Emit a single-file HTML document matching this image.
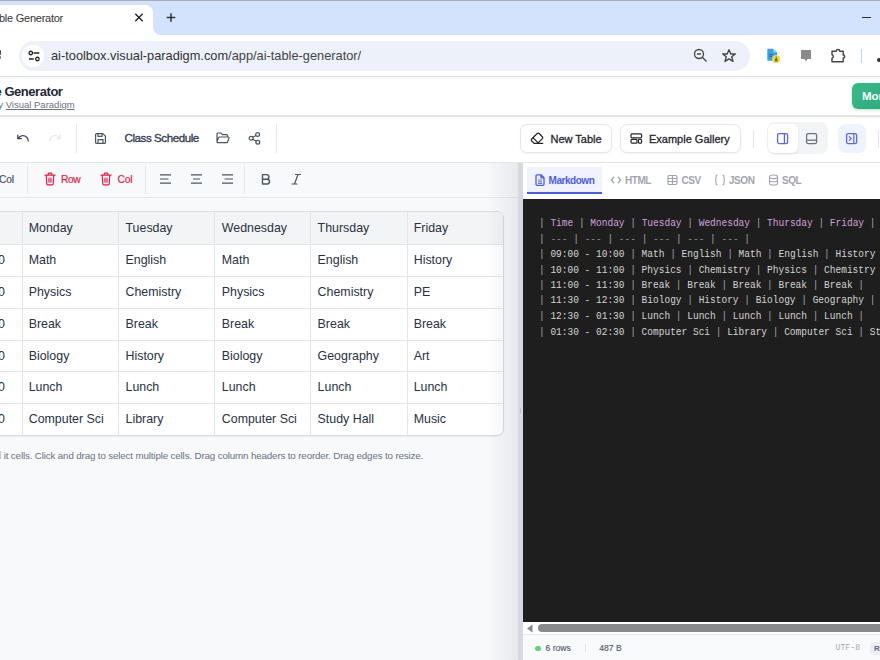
<!DOCTYPE html>
<html><head><meta charset="utf-8">
<style>
*{box-sizing:border-box;margin:0;padding:0}
html,body{width:880px;height:660px;overflow:hidden;background:#fff;font-family:"Liberation Sans",sans-serif;position:relative}
.a{position:absolute}
svg{display:block}
.t{white-space:nowrap}
.h{color:#d2a0dc}.p{color:#a6a6a6}.g{color:#858585}
.cell{font-size:12.4px;color:#283241;line-height:14px}
</style></head><body>

<!-- ===== browser tab strip ===== -->
<div class="a" style="left:0;top:0;width:880px;height:35px;background:#d3e3fd"></div>
<div class="a" style="left:0;top:0;width:880px;height:1px;background:#a9acb2"></div>
<div class="a" style="left:145px;top:25px;width:20px;height:10px;background:#fff"></div>
<div class="a" style="left:153px;top:1px;width:727px;height:34px;background:#d3e3fd;border-bottom-left-radius:8px"></div>
<div class="a" style="left:-10px;top:5px;width:163px;height:35px;background:#fff;border-top-right-radius:8px"></div>
<div class="a t" style="left:-1px;top:12px;font-size:11px;letter-spacing:-0.25px;color:#333">ble Generator</div>
<svg class="a" style="left:133px;top:11px" width="12" height="12" viewBox="0 0 12 12"><path d="M2.3 2.8L9.7 10.2M9.7 2.8L2.3 10.2" stroke="#2a2a2a" stroke-width="1.5"/></svg>
<svg class="a" style="left:165px;top:11px" width="12" height="12" viewBox="0 0 12 12"><path d="M6 2.2V10.8M1.7 6.5H10.3" stroke="#333" stroke-width="1.5"/></svg>

<div class="a" style="left:862px;top:16.6px;width:9px;height:1.4px;background:#2a2a2a"></div>
<!-- ===== browser toolbar ===== -->
<div class="a" style="left:0;top:76px;width:880px;height:1.2px;background:#dedede"></div><div class="a" style="left:0;top:77.2px;width:880px;height:2.5px;background:linear-gradient(rgba(0,0,0,0.035),rgba(0,0,0,0))"></div>
<div class="a" style="left:19px;top:41px;width:731px;height:30px;background:#edf2fa;border-radius:15px"></div>
<div class="a" style="left:22px;top:45px;width:22px;height:22px;background:#fff;border-radius:11px"></div>
<svg class="a" style="left:27.5px;top:49.6px" width="13" height="13" viewBox="0 0 13 13"><circle cx="2.8" cy="3" r="1.75" fill="none" stroke="#222" stroke-width="1.3"/><path d="M5.6 3H11.3M1 9H5.8" stroke="#222" stroke-width="1.3"/><circle cx="9.4" cy="9" r="1.75" fill="none" stroke="#222" stroke-width="1.3"/></svg>
<div class="a t" style="left:51px;top:48px;font-size:12.8px;color:#333">ai-toolbox.visual-paradigm.com<span style="color:#444">/app/ai-table-generator/</span></div>
<!-- partial icon at left edge -->
<div class="a" style="left:-3px;top:50px;width:4px;height:5px;background:#4a4a4a;border-radius:1px"></div><div class="a" style="left:-3px;top:56px;width:4px;height:2.5px;background:#777;border-radius:1px"></div>
<!-- zoom -->
<svg class="a" style="left:693px;top:48px" width="15" height="15" viewBox="0 0 15 15"><circle cx="6" cy="6" r="4.5" fill="none" stroke="#474747" stroke-width="1.35"/><path d="M4 6H8M9.3 9.3L13.5 13.5" stroke="#474747" stroke-width="1.35"/></svg>
<!-- star -->
<svg class="a" style="left:721px;top:48px" width="16" height="16" viewBox="0 0 16 16"><path d="M8 1.8L9.8 6H14.3L10.7 8.8L12 13.4L8 10.8L4 13.4L5.3 8.8L1.7 6H6.2Z" fill="none" stroke="#474747" stroke-width="1.4" stroke-linejoin="round"/></svg>
<!-- ext icons -->
<svg class="a" style="left:766px;top:48px" width="16" height="16" viewBox="0 0 16 16"><path d="M2.3 0.7H7.2L11 4.5V11.8A1 1 0 0 1 10 12.8H2.3A1 1 0 0 1 1.3 11.8V1.7A1 1 0 0 1 2.3 0.7Z" fill="#3aa0ea"/><path d="M7.2 0.7L11 4.5H7.2Z" fill="#6fe0c8"/><path d="M3.2 6.5H6.6M3.2 8.3H6" stroke="#1d5e9e" stroke-width="0.9"/><circle cx="10.2" cy="10.9" r="4" fill="#f3dc3a"/><path d="M10.2 8.6V11.8M8.9 10.9L10.2 12.3L11.5 10.9M8.6 12.9H11.8" stroke="#4a4320" stroke-width="0.9" fill="none"/></svg>
<svg class="a" style="left:800px;top:49px" width="12" height="14" viewBox="0 0 12 14"><path d="M1 1H11V10H7.5L6 12.5L4.5 10H1Z" fill="#8a8a8a"/></svg>
<svg class="a" style="left:830px;top:47px" width="17" height="17" viewBox="0 0 17 17"><path d="M2 4.2H6.3A1.6 1.6 0 0 1 9.7 4.2H13.2V8A1.5 1.5 0 0 1 13.2 11V14.8H2V11.2A2 1.8 0 0 0 2 7.8Z" fill="none" stroke="#474747" stroke-width="1.45" stroke-linejoin="round"/></svg>
<div class="a" style="left:861px;top:49px;width:1px;height:14px;background:#c4d4f2"></div>
<div class="a" style="left:877px;top:58px;width:4px;height:4px;background:#333;border-radius:2px"></div>

<!-- ===== app header ===== -->
<div class="a" style="left:0;top:115px;width:880px;height:1.5px;background:#e3e5e9"></div><div class="a" style="left:0;top:116.5px;width:880px;height:3px;background:linear-gradient(rgba(0,0,0,0.03),rgba(0,0,0,0))"></div>
<div class="a t" style="left:-29.5px;top:84px;font-size:13px;font-weight:bold;letter-spacing:-0.45px;color:#1f2937">Table Generator</div>
<div class="a t" style="left:-7px;top:99px;font-size:9.5px;color:#6b7280">by <span style="text-decoration:underline">Visual Paradigm</span></div>
<div class="a" style="left:852px;top:83px;width:60px;height:26px;border-radius:6px;background:linear-gradient(135deg,#38bb86,#27a37f);box-shadow:0 1px 3px rgba(16,120,80,0.25)"></div>
<div class="a t" style="left:862px;top:90.2px;font-size:11.5px;font-weight:bold;color:#fff">More</div>

<!-- ===== app toolbar ===== -->

<!-- toolbar left -->
<svg class="a" style="left:16px;top:131px" width="14" height="14" viewBox="0 0 24 24"><path d="M3 7v6h6M21 17a9 9 0 0 0-9-9 9 9 0 0 0-6 2.3L3 13" fill="none" stroke="#374151" stroke-width="2.1" stroke-linecap="round" stroke-linejoin="round"/></svg>
<svg class="a" style="left:48px;top:131px" width="14" height="14" viewBox="0 0 24 24"><path d="M21 7v6h-6M3 17a9 9 0 0 1 9-9 9 9 0 0 1 6 2.3L21 13" fill="none" stroke="#e5e7eb" stroke-width="2.1" stroke-linecap="round" stroke-linejoin="round"/></svg>
<div class="a" style="left:76px;top:124px;width:1px;height:29px;background:#e5e7eb"></div>
<svg class="a" style="left:94px;top:132px" width="13" height="13" viewBox="0 0 13 13"><path d="M1.6 2.6A1 1 0 0 1 2.6 1.6H8.8L11.4 4.2V10.4A1 1 0 0 1 10.4 11.4H2.6A1 1 0 0 1 1.6 10.4Z" fill="none" stroke="#4b5563" stroke-width="1.2" stroke-linejoin="round"/><path d="M4 11.4V7.6H9V11.4M4 1.6V4.4H8V1.6" fill="none" stroke="#4b5563" stroke-width="1.2" stroke-linejoin="round"/></svg>
<div class="a t" style="left:124.5px;top:131px;font-size:11.6px;letter-spacing:-0.45px;-webkit-text-stroke:0.35px #374151;color:#374151">Class Schedule</div>
<svg class="a" style="left:216px;top:132px" width="14" height="12" viewBox="0 0 14 12"><path d="M1 9.5V2A1 1 0 0 1 2 1H4.8L6.4 2.6H10.6A1 1 0 0 1 11.6 3.6V5M1 9.5L2.6 5.7A1 1 0 0 1 3.5 5H12.3A0.8 0.8 0 0 1 13 6L11.6 10A1 1 0 0 1 10.7 10.7H2.1A1 1 0 0 1 1 9.5Z" fill="none" stroke="#4b5563" stroke-width="1.2" stroke-linejoin="round"/></svg>
<svg class="a" style="left:248px;top:131px" width="13" height="14" viewBox="0 0 13 14"><circle cx="9.6" cy="3.5" r="1.9" fill="none" stroke="#4b5563" stroke-width="1.2"/><circle cx="3.1" cy="7.3" r="1.9" fill="none" stroke="#4b5563" stroke-width="1.2"/><circle cx="9.8" cy="11.2" r="1.9" fill="none" stroke="#4b5563" stroke-width="1.2"/><path d="M4.8 6.3L7.9 4.5M4.8 8.3L8.1 10.2" stroke="#4b5563" stroke-width="1.2"/></svg>
<div class="a" style="left:276px;top:124px;width:1px;height:29px;background:#e5e7eb"></div>

<!-- toolbar right -->
<div class="a" style="left:520px;top:124px;width:92px;height:29px;border:1px solid #e5e7eb;border-radius:7px;background:#fff;box-shadow:0 1px 2px rgba(0,0,0,0.05)"></div>
<svg class="a" style="left:530px;top:132px" width="14" height="12" viewBox="0 0 24 21"><path d="M7 20L2.7 15.7C1.7 14.7 1.7 13.2 2.7 12.3L12.3 2.7C13.3 1.7 14.8 1.7 15.7 2.7L21.3 8.3C22.3 9.3 22.3 10.8 21.3 11.7L13 20M22 20H7M5 10L14 19" fill="none" stroke="#27272a" stroke-width="2.1" stroke-linecap="round" stroke-linejoin="round"/></svg>
<div class="a t" style="left:550.5px;top:132.6px;font-size:11px;-webkit-text-stroke:0.3px #27272a;color:#27272a">New Table</div>
<div class="a" style="left:620px;top:124px;width:121px;height:29px;border:1px solid #e5e7eb;border-radius:7px;background:#fff;box-shadow:0 1px 2px rgba(0,0,0,0.05)"></div>
<svg class="a" style="left:630px;top:133px" width="13" height="11" viewBox="0 0 13 11"><rect x="1" y="0.8" width="10.6" height="4" rx="1" fill="none" stroke="#27272a" stroke-width="1.2"/><rect x="1" y="6.4" width="6" height="3.8" rx="1" fill="none" stroke="#27272a" stroke-width="1.2"/><rect x="8.4" y="6.4" width="3.2" height="3.8" rx="1" fill="none" stroke="#27272a" stroke-width="1.2"/></svg>
<div class="a t" style="left:649px;top:132.6px;font-size:11px;-webkit-text-stroke:0.3px #27272a;color:#27272a">Example Gallery</div>
<div class="a" style="left:753px;top:130px;width:1px;height:18px;background:#e5e7eb"></div>
<div class="a" style="left:767px;top:122px;width:61px;height:32px;border-radius:8px;background:#f3f4f6"></div>
<div class="a" style="left:768px;top:124px;width:30px;height:29px;border-radius:6px;background:#fff;box-shadow:0 1px 2px rgba(0,0,0,0.1)"></div>
<svg class="a" style="left:776px;top:132px" width="13" height="13" viewBox="0 0 13 13"><rect x="1.6" y="1.6" width="10" height="10" rx="1.6" fill="none" stroke="#5a66f0" stroke-width="1.3"/><path d="M8.4 1.6V11.6" stroke="#5a66f0" stroke-width="1.3"/></svg>
<svg class="a" style="left:805px;top:132px" width="13" height="13" viewBox="0 0 13 13"><rect x="1.6" y="1.6" width="10" height="10" rx="1.6" fill="none" stroke="#6b7280" stroke-width="1.3"/><path d="M1.6 8.2H11.6" stroke="#6b7280" stroke-width="1.3"/></svg>
<div class="a" style="left:837.5px;top:124px;width:28px;height:29px;border-radius:7px;background:#eef4ff"></div>
<svg class="a" style="left:845px;top:132px" width="13" height="13" viewBox="0 0 13 13"><rect x="1.6" y="1.6" width="10" height="10" rx="1.6" fill="none" stroke="#5a66f0" stroke-width="1.3"/><path d="M8.8 1.6V11.6M4 4.3L6.2 6.6L4 8.9" fill="none" stroke="#5a66f0" stroke-width="1.2"/></svg>
<div class="a" style="left:878px;top:130px;width:1px;height:18px;background:#e5e7eb"></div>

<!-- ===== left panel ===== -->
<div class="a" style="left:0;top:162px;width:518px;height:498px;background:#f8f9fb"></div>
<div class="a" style="left:0;top:197px;width:518px;height:1px;background:#e5e7eb"></div>
<!-- format toolbar -->
<div class="a t" style="left:-1px;top:174px;font-size:10.3px;letter-spacing:-0.2px;-webkit-text-stroke:0.2px #4b5563;color:#4b5563">Col</div>
<div class="a" style="left:27px;top:165px;width:1px;height:29px;background:#e5e7eb"></div>
<svg class="a" style="left:44px;top:172px" width="12" height="14" viewBox="0 0 12 14"><path d="M1 3.2H11M4.2 3.2V2A0.8 0.8 0 0 1 5 1.2H7A0.8 0.8 0 0 1 7.8 2V3.2M2.2 3.2L2.8 12A1 1 0 0 0 3.8 12.9H8.2A1 1 0 0 0 9.2 12L9.8 3.2M5 6V10.2M7 6V10.2" fill="none" stroke="#e11d48" stroke-width="1.2" stroke-linecap="round" stroke-linejoin="round"/></svg>
<div class="a t" style="left:61px;top:174px;font-size:10.3px;letter-spacing:-0.5px;-webkit-text-stroke:0.2px #e11d48;color:#e11d48">Row</div>
<svg class="a" style="left:100px;top:172px" width="12" height="14" viewBox="0 0 12 14"><path d="M1 3.2H11M4.2 3.2V2A0.8 0.8 0 0 1 5 1.2H7A0.8 0.8 0 0 1 7.8 2V3.2M2.2 3.2L2.8 12A1 1 0 0 0 3.8 12.9H8.2A1 1 0 0 0 9.2 12L9.8 3.2M5 6V10.2M7 6V10.2" fill="none" stroke="#e11d48" stroke-width="1.2" stroke-linecap="round" stroke-linejoin="round"/></svg>
<div class="a t" style="left:117.5px;top:174px;font-size:10.3px;letter-spacing:-0.2px;-webkit-text-stroke:0.2px #e11d48;color:#e11d48">Col</div>
<div class="a" style="left:145px;top:165px;width:1px;height:29px;background:#e5e7eb"></div>
<svg class="a" style="left:159px;top:173px" width="13" height="12" viewBox="0 0 13 12"><path d="M1 1.9H12M1 6H9.5M1 10.1H12" stroke="#4b5563" stroke-width="1.2"/></svg>
<svg class="a" style="left:190px;top:173px" width="13" height="12" viewBox="0 0 13 12"><path d="M1 1.9H12M3 6H10M1 10.1H12" stroke="#4b5563" stroke-width="1.2"/></svg>
<svg class="a" style="left:221px;top:173px" width="13" height="12" viewBox="0 0 13 12"><path d="M1 1.9H12M3.5 6H12M1 10.1H12" stroke="#4b5563" stroke-width="1.2"/></svg>
<div class="a" style="left:244px;top:165px;width:1px;height:29px;background:#e5e7eb"></div>
<svg class="a" style="left:260px;top:173px" width="12" height="12" viewBox="0 0 12 12"><path d="M2.5 1.6H6.6A2.3 2.3 0 0 1 6.6 6.2H2.5ZM2.5 6.2H7.1A2.4 2.4 0 0 1 7.1 11H2.5Z" fill="none" stroke="#4b5563" stroke-width="1.4" stroke-linejoin="round"/></svg>
<svg class="a" style="left:290px;top:173px" width="12" height="12" viewBox="0 0 12 12"><path d="M5 1.5H11M1.5 11H7.5M8 1.5L4.5 11" fill="none" stroke="#4b5563" stroke-width="1.2"/></svg>

<!-- table -->
<div class="a" style="left:-80px;top:211px;width:584px;height:225px;border:1px solid #d9dce2;border-radius:7px;background:#fff;box-shadow:0 1px 2px rgba(0,0,0,0.06);overflow:hidden">
</div>
<div class="a" style="left:-79px;top:212px;width:582px;height:32px;background:#f3f4f6"></div>
<div class="a" style="left:-79px;top:244px;width:582px;height:1px;background:#e3e5e9"></div>
<div class="a" style="left:-79px;top:276px;width:582px;height:1px;background:#e3e5e9"></div>
<div class="a" style="left:-79px;top:308px;width:582px;height:1px;background:#e3e5e9"></div>
<div class="a" style="left:-79px;top:340px;width:582px;height:1px;background:#e3e5e9"></div>
<div class="a" style="left:-79px;top:371px;width:582px;height:1px;background:#e3e5e9"></div>
<div class="a" style="left:-79px;top:403px;width:582px;height:1px;background:#e3e5e9"></div>
<div class="a" style="left:22px;top:212px;width:1px;height:223px;background:#e3e5e9"></div>
<div class="a" style="left:118px;top:212px;width:1px;height:223px;background:#e3e5e9"></div>
<div class="a" style="left:214px;top:212px;width:1px;height:223px;background:#e3e5e9"></div>
<div class="a" style="left:310px;top:212px;width:1px;height:223px;background:#e3e5e9"></div>
<div class="a" style="left:407px;top:212px;width:1px;height:223px;background:#e3e5e9"></div>
<div class="a t cell" style="left:28.7px;top:221px">Monday</div>
<div class="a t cell" style="left:125.5px;top:221px">Tuesday</div>
<div class="a t cell" style="left:221.8px;top:221px">Wednesday</div>
<div class="a t cell" style="left:317.6px;top:221px">Thursday</div>
<div class="a t cell" style="left:413.7px;top:221px">Friday</div>
<div class="a t cell" style="right:875px;top:253px">09:00 - 10:00</div>
<div class="a t cell" style="left:28.7px;top:253px">Math</div>
<div class="a t cell" style="left:125.5px;top:253px">English</div>
<div class="a t cell" style="left:221.8px;top:253px">Math</div>
<div class="a t cell" style="left:317.6px;top:253px">English</div>
<div class="a t cell" style="left:413.7px;top:253px">History</div>
<div class="a t cell" style="right:875px;top:285px">10:00 - 11:00</div>
<div class="a t cell" style="left:28.7px;top:285px">Physics</div>
<div class="a t cell" style="left:125.5px;top:285px">Chemistry</div>
<div class="a t cell" style="left:221.8px;top:285px">Physics</div>
<div class="a t cell" style="left:317.6px;top:285px">Chemistry</div>
<div class="a t cell" style="left:413.7px;top:285px">PE</div>
<div class="a t cell" style="right:875px;top:317px">11:00 - 11:30</div>
<div class="a t cell" style="left:28.7px;top:317px">Break</div>
<div class="a t cell" style="left:125.5px;top:317px">Break</div>
<div class="a t cell" style="left:221.8px;top:317px">Break</div>
<div class="a t cell" style="left:317.6px;top:317px">Break</div>
<div class="a t cell" style="left:413.7px;top:317px">Break</div>
<div class="a t cell" style="right:875px;top:349px">11:30 - 12:30</div>
<div class="a t cell" style="left:28.7px;top:349px">Biology</div>
<div class="a t cell" style="left:125.5px;top:349px">History</div>
<div class="a t cell" style="left:221.8px;top:349px">Biology</div>
<div class="a t cell" style="left:317.6px;top:349px">Geography</div>
<div class="a t cell" style="left:413.7px;top:349px">Art</div>
<div class="a t cell" style="right:875px;top:380px">12:30 - 01:30</div>
<div class="a t cell" style="left:28.7px;top:380px">Lunch</div>
<div class="a t cell" style="left:125.5px;top:380px">Lunch</div>
<div class="a t cell" style="left:221.8px;top:380px">Lunch</div>
<div class="a t cell" style="left:317.6px;top:380px">Lunch</div>
<div class="a t cell" style="left:413.7px;top:380px">Lunch</div>
<div class="a t cell" style="right:875px;top:412px">01:30 - 02:30</div>
<div class="a t cell" style="left:28.7px;top:412px">Computer Sci</div>
<div class="a t cell" style="left:125.5px;top:412px">Library</div>
<div class="a t cell" style="left:221.8px;top:412px">Computer Sci</div>
<div class="a t cell" style="left:317.6px;top:412px">Study Hall</div>
<div class="a t cell" style="left:413.7px;top:412px">Music</div>
<div class="a t" style="left:3.7px;top:450px;font-size:9.8px;letter-spacing:-0.155px;color:#6b7280">it cells. Click and drag to select multiple cells. Drag column headers to reorder. Drag edges to resize.</div><div class="a" style="left:0;top:451px;width:1px;height:8px;background:#c5c9d0"></div>

<!-- resize shadow -->
<div class="a" style="left:486px;top:162px;width:32px;height:498px;background:linear-gradient(90deg,rgba(30,40,60,0),rgba(30,40,60,0.075))"></div>


<!-- ===== divider ===== -->
<div class="a" style="left:518px;top:162px;width:5px;height:498px;background:#d6d9df"></div>

<div class="a" style="left:519.5px;top:408px;width:1.5px;height:5px;background:#b9bec7;border-radius:1px"></div>
<!-- ===== right panel ===== -->
<div class="a" style="left:523px;top:162px;width:357px;height:37px;background:#fff"></div>
<div class="a" style="left:523px;top:199px;width:357px;height:423px;background:#1e1e1e"></div>
<div class="a" style="left:523px;top:622px;width:357px;height:12px;background:#fff"></div>
<div class="a" style="left:523px;top:634px;width:357px;height:1px;background:#e5e7eb"></div>
<div class="a" style="left:523px;top:635px;width:357px;height:25px;background:#f9fafb"></div>


<!-- tabs -->
<div class="a" style="left:527px;top:167px;width:75px;height:27px;background:#f0f3fe"></div>
<div class="a" style="left:527px;top:192px;width:75px;height:2px;background:#4a5cef"></div>
<svg class="a" style="left:535px;top:174px" width="10" height="12" viewBox="0 0 10 12"><path d="M1 1.8A1 1 0 0 1 2 0.8H6L9 3.8V10.3A1 1 0 0 1 8 11.3H2A1 1 0 0 1 1 10.3Z M6 0.8V3.8H9" fill="none" stroke="#4a5cef" stroke-width="1.3" stroke-linejoin="round"/><path d="M3 6H7M3 7.8H7M3 9.5H7" stroke="#4a5cef" stroke-width="0.9"/></svg>
<div class="a t" style="left:548.5px;top:175px;font-size:10px;font-weight:bold;letter-spacing:-0.45px;color:#4a5cef">Markdown</div>
<svg class="a" style="left:610px;top:175px" width="12" height="10" viewBox="0 0 12 10"><path d="M4.2 1.8L1.4 5L4.2 8.2M7.8 1.8L10.6 5L7.8 8.2" fill="none" stroke="#a0a6b1" stroke-width="1.4"/></svg>
<div class="a t" style="left:625px;top:174.5px;font-size:10px;font-weight:bold;letter-spacing:-0.45px;color:#a0a6b1">HTML</div>
<svg class="a" style="left:667px;top:174px" width="11" height="12" viewBox="0 0 11 12"><rect x="1" y="1.5" width="9" height="9" rx="1.2" fill="none" stroke="#9ca3af" stroke-width="1.1"/><path d="M1 4.5H10M1 7.5H10M5.5 1.5V10.5" stroke="#9ca3af" stroke-width="1.1"/></svg>
<div class="a t" style="left:681.5px;top:174.5px;font-size:10px;font-weight:bold;letter-spacing:-0.45px;color:#a0a6b1">CSV</div>
<svg class="a" style="left:714px;top:174px" width="12" height="12" viewBox="0 0 12 12"><path d="M3.5 1C2.3 1 2 1.5 2 2.5V4.5C2 5.3 1.5 6 1 6C1.5 6 2 6.7 2 7.5V9.5C2 10.5 2.3 11 3.5 11M8.5 1C9.7 1 10 1.5 10 2.5V4.5C10 5.3 10.5 6 11 6C10.5 6 10 6.7 10 7.5V9.5C10 10.5 9.7 11 8.5 11" fill="none" stroke="#9ca3af" stroke-width="1.05"/></svg>
<div class="a t" style="left:729px;top:174.5px;font-size:10px;font-weight:bold;letter-spacing:-0.45px;color:#a0a6b1">JSON</div>
<svg class="a" style="left:768px;top:174px" width="11" height="12" viewBox="0 0 11 12"><ellipse cx="5.5" cy="2.8" rx="4" ry="1.8" fill="none" stroke="#9ca3af" stroke-width="1.1"/><path d="M1.5 2.8V9.2A4 1.8 0 0 0 9.5 9.2V2.8M1.5 6A4 1.8 0 0 0 9.5 6" fill="none" stroke="#9ca3af" stroke-width="1.1"/></svg>
<div class="a t" style="left:782px;top:174.5px;font-size:10px;font-weight:bold;letter-spacing:-0.45px;color:#a0a6b1">SQL</div>

<!-- code -->
<pre class="a" style="left:539px;top:215.7px;font-family:'Liberation Mono',monospace;font-size:9.5px;line-height:13.84px;color:#d4d4d4;white-space:pre;transform:scaleY(1.12);transform-origin:0 0"><span class="p">|</span> <span class="h">Time</span> <span class="p">|</span> <span class="h">Monday</span> <span class="p">|</span> <span class="h">Tuesday</span> <span class="p">|</span> <span class="h">Wednesday</span> <span class="p">|</span> <span class="h">Thursday</span> <span class="p">|</span> <span class="h">Friday</span> <span class="p">|</span>
<span class="p">|</span> <span class="g">---</span> <span class="p">|</span> <span class="g">---</span> <span class="p">|</span> <span class="g">---</span> <span class="p">|</span> <span class="g">---</span> <span class="p">|</span> <span class="g">---</span> <span class="p">|</span> <span class="g">---</span> <span class="p">|</span>
<span class="p">|</span> 09:00 - 10:00 <span class="p">|</span> Math <span class="p">|</span> English <span class="p">|</span> Math <span class="p">|</span> English <span class="p">|</span> History <span class="p">|</span>
<span class="p">|</span> 10:00 - 11:00 <span class="p">|</span> Physics <span class="p">|</span> Chemistry <span class="p">|</span> Physics <span class="p">|</span> Chemistry <span class="p">|</span> PE <span class="p">|</span>
<span class="p">|</span> 11:00 - 11:30 <span class="p">|</span> Break <span class="p">|</span> Break <span class="p">|</span> Break <span class="p">|</span> Break <span class="p">|</span> Break <span class="p">|</span>
<span class="p">|</span> 11:30 - 12:30 <span class="p">|</span> Biology <span class="p">|</span> History <span class="p">|</span> Biology <span class="p">|</span> Geography <span class="p">|</span> Art <span class="p">|</span>
<span class="p">|</span> 12:30 - 01:30 <span class="p">|</span> Lunch <span class="p">|</span> Lunch <span class="p">|</span> Lunch <span class="p">|</span> Lunch <span class="p">|</span> Lunch <span class="p">|</span>
<span class="p">|</span> 01:30 - 02:30 <span class="p">|</span> Computer Sci <span class="p">|</span> Library <span class="p">|</span> Computer Sci <span class="p">|</span> Study Hall <span class="p">|</span> Music <span class="p">|</span></pre>

<!-- scrollbar -->
<svg class="a" style="left:526px;top:624px" width="8" height="9" viewBox="0 0 8 9"><path d="M6.5 0.5V8.5L1 4.5Z" fill="#8a8a8a"/></svg>
<div class="a" style="left:538px;top:624px;width:360px;height:8px;border-radius:4px;background:#8a8a8a"></div>

<!-- status -->
<div class="a" style="left:535px;top:646px;width:5.5px;height:4.8px;border-radius:3px;background:#5bd47a"></div>
<div class="a t" style="left:545.5px;top:643px;font-size:8.6px;-webkit-text-stroke:0.15px #555d6b;color:#555d6b">6 rows</div>
<div class="a" style="left:585px;top:644px;width:1px;height:8px;background:#dfe2e6"></div>
<div class="a t" style="left:599.3px;top:643px;font-size:8.6px;-webkit-text-stroke:0.15px #555d6b;color:#555d6b">487 B</div>
<div class="a t" style="left:835.5px;top:642.5px;font-family:'Liberation Mono',monospace;font-size:8.2px;color:#a3a9b4">UTF-8</div>
<div class="a" style="left:869.5px;top:641.5px;width:30px;height:13.5px;border-radius:4px;background:#eceef2"></div>
<div class="a t" style="left:874px;top:643.5px;font-size:8px;font-weight:bold;color:#656c7a">RAW</div>
<div class="a" style="left:0;top:161.5px;width:880px;height:1.5px;background:#e3e5e9"></div>
</body></html>
